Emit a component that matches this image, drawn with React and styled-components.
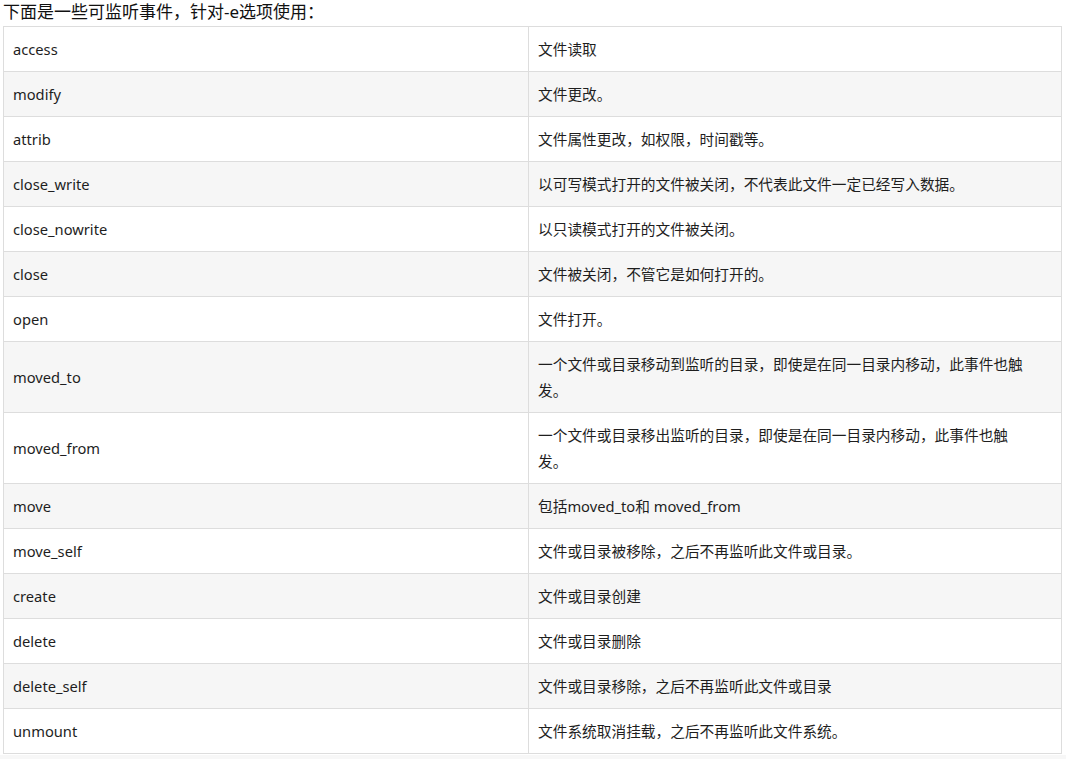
import React from 'react';
import styled, {createGlobalStyle} from 'styled-components';

const GlobalStyle = createGlobalStyle`
	html, body {
		margin: 0;
		padding: 0;
		background: #fff;
	}
	body {
		font-family: "Noto Sans", "Noto Sans CJK SC", sans-serif;
		color: #222;
		text-spacing-trim: space-all;
	}
`;

const Page = styled.div`
	display: flex;
	flex-direction: column;
`;

const Article = styled.div`
	padding: 0 4px 0 3px;
`;

const Lead = styled.p`
	margin: 0 0 2px;
	font-size: 17px;
	line-height: 24px;
	color: #111;
`;

const EventTable = styled.table`
	width: 100%;
	border-collapse: collapse;
	table-layout: fixed;
	font-size: 14.7px;
	line-height: 26px;
`;

const Row = styled.tr`
	background: ${({$striped}) => ($striped ? '#f6f6f6' : '#fff')};
`;

const Cell = styled.td`
	border: 1px solid #ddd;
	padding: 9px;
	vertical-align: middle;
	white-space: pre-line;
	color: #1e1e1e;
`;

const NameCell = styled(Cell)`
	width: 506px;
`;

const Band = styled.div`
	margin-top: 1px;
	height: 20px;
	background: #f7f7f7;
`;

const events = [
	['access', '文件读取'],
	['modify', '文件更改。'],
	['attrib', '文件属性更改，如权限，时间戳等。'],
	['close_write', '以可写模式打开的文件被关闭，不代表此文件一定已经写入数据。'],
	['close_nowrite', '以只读模式打开的文件被关闭。'],
	['close', '文件被关闭，不管它是如何打开的。'],
	['open', '文件打开。'],
	['moved_to', '一个文件或目录移动到监听的目录，即使是在同一目录内移动，此事件也触\n发。'],
	['moved_from', '一个文件或目录移出监听的目录，即使是在同一目录内移动，此事件也触\n发。'],
	['move', '包括moved_to和 moved_from'],
	['move_self', '文件或目录被移除，之后不再监听此文件或目录。'],
	['create', '文件或目录创建'],
	['delete', '文件或目录删除'],
	['delete_self', '文件或目录移除，之后不再监听此文件或目录'],
	['unmount', '文件系统取消挂载，之后不再监听此文件系统。'],
];

const App = () => {
	return (
		<Page>
			<GlobalStyle />
			<Article>
				<Lead>下面是一些可监听事件，针对-e选项使用：</Lead>
				<EventTable>
					<tbody>
						{events.map(([name, desc], i) => (
							<Row key={name} $striped={i % 2 === 1}>
								<NameCell>{name}</NameCell>
								<Cell>{desc}</Cell>
							</Row>
						))}
					</tbody>
				</EventTable>
			</Article>
			<Band />
		</Page>
	);
};

export default App;
